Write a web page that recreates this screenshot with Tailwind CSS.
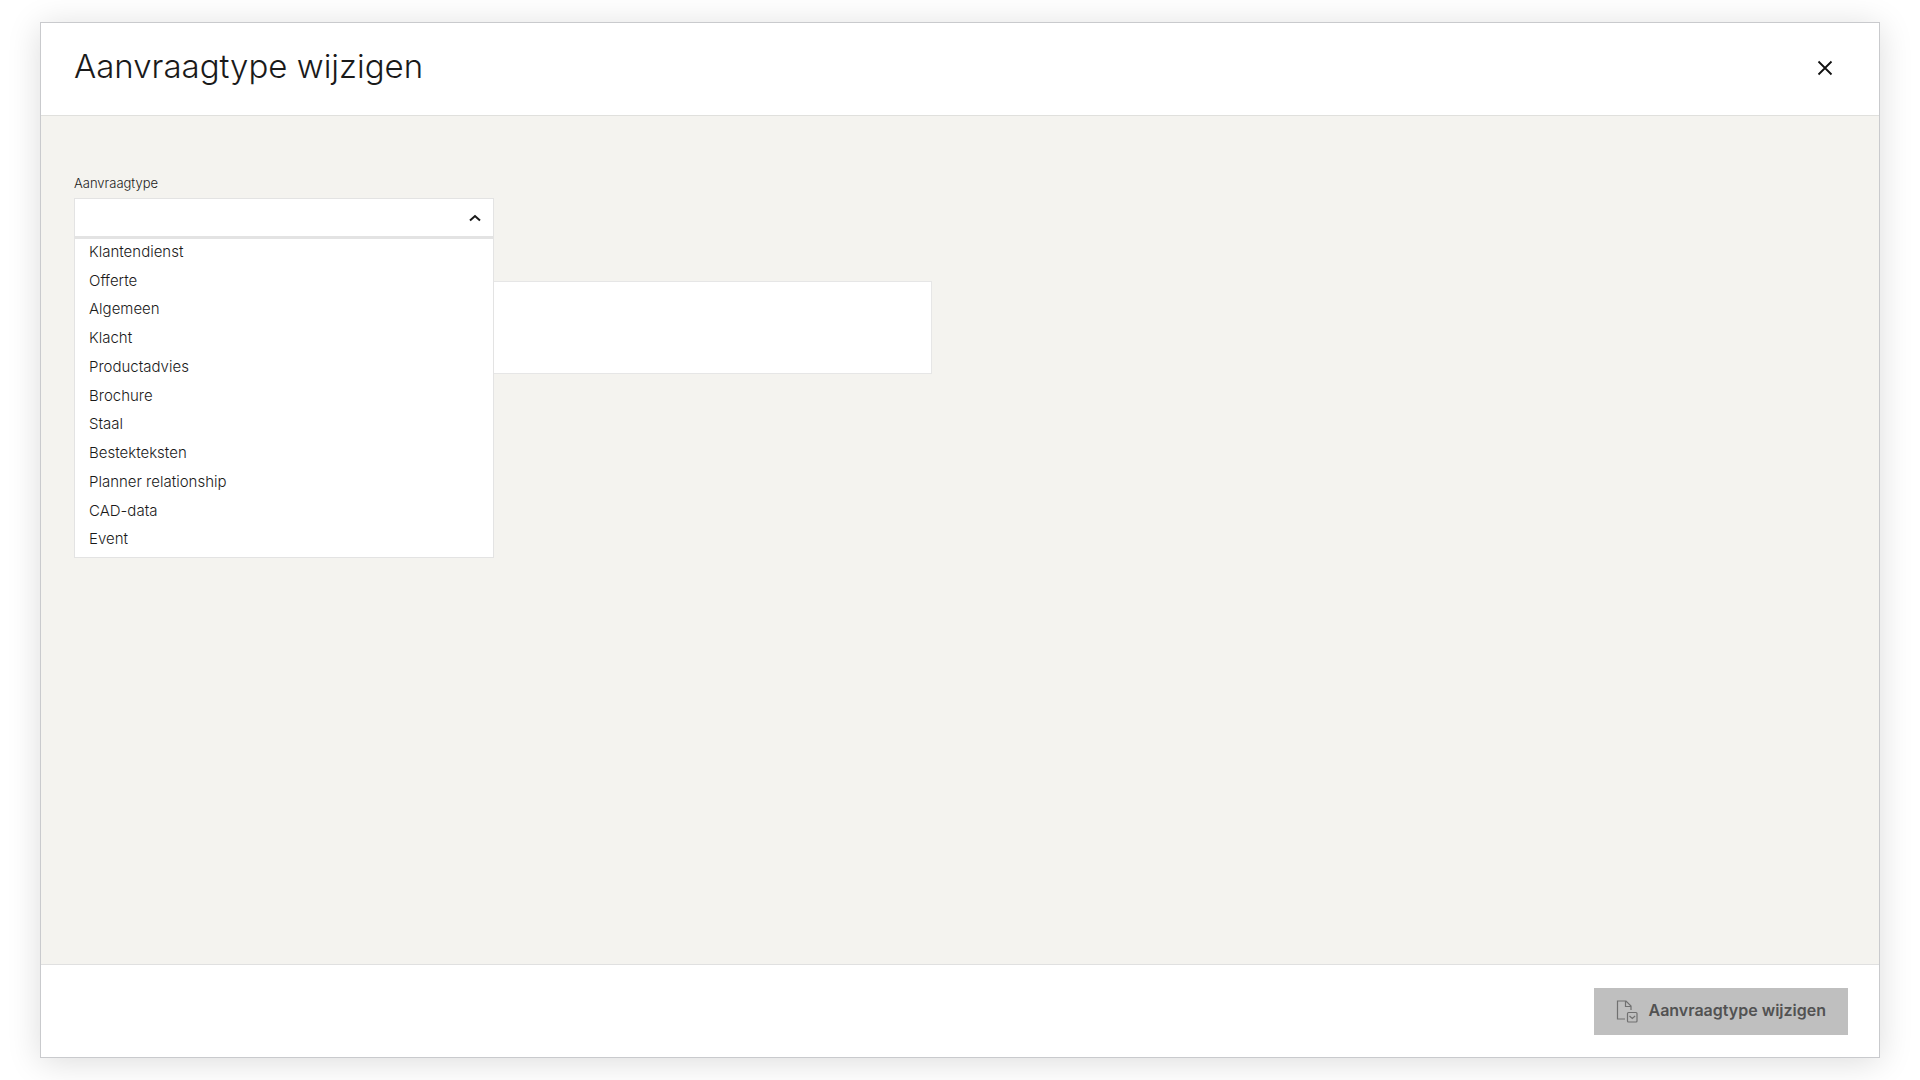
<!DOCTYPE html>
<html lang="nl">
<head>
<meta charset="utf-8">
<meta name="viewport" content="width=device-width, initial-scale=1">
<title>Aanvraagtype wijzigen</title>
<script src="https://cdn.jsdelivr.net/npm/@tailwindcss/browser@4"></script>
</head>
<body class="flex min-h-screen bg-white px-10 py-[22px] font-['Inter','Liberation_Sans',sans-serif] text-[#1a1a1a]">
<section role="dialog" aria-labelledby="dialog-title" class="flex flex-1 flex-col border border-[#c9cacd] bg-white shadow-[0_4px_32px_rgba(0,0,0,0.14)]">
  <header class="flex h-[93px] items-center justify-between border-b border-[#e0e0dd] pr-10 pb-0.5 pl-[33px]">
    <h1 id="dialog-title" class="pb-1 text-[33px] leading-10 font-light">Aanvraagtype wijzigen</h1>
    <button type="button" aria-label="Sluiten" class="flex size-7 items-center justify-center">
      <svg class="size-4" viewBox="0 0 16 16" fill="none" stroke="#111" stroke-width="1.8"><path d="M1.5 1.5l13 13M14.5 1.5l-13 13"/></svg>
    </button>
  </header>

  <main class="flex-1 bg-[#f4f3ef] px-[33px] pt-[58px]">
    <div class="relative w-[420px]">
      <label for="type" class="block pb-1.5 text-[13px] leading-[18px] font-light">Aanvraagtype</label>
      <select id="type" class="block h-[39px] w-full appearance-none border border-[#e3e3e3] bg-white px-3.5"><option value=""></option></select>
      <svg class="pointer-events-none absolute right-[13px] bottom-[11px] h-4 w-3" viewBox="0 0 12 16" fill="none" stroke="#1a1a1a" stroke-width="2"><path d="M1 10.5l5-4.5 5 4.5"/></svg>
      <ul role="listbox" aria-label="Aanvraagtype" class="absolute top-full left-0 z-10 grid h-[321px] w-full auto-rows-fr border border-t-2 border-[#e3e3e3] bg-white pb-0.5 pl-3.5 text-[15px] leading-[26px] font-light">
        <li role="option">Klantendienst</li>
        <li role="option">Offerte</li>
        <li role="option">Algemeen</li>
        <li role="option">Klacht</li>
        <li role="option">Productadvies</li>
        <li role="option">Brochure</li>
        <li role="option">Staal</li>
        <li role="option">Bestekteksten</li>
        <li role="option">Planner relationship</li>
        <li role="option">CAD-data</li>
        <li role="option">Event</li>
      </ul>
    </div>
    <textarea aria-label="Opmerking" class="mt-11 block h-[93px] w-full max-w-[858px] resize-none border border-[#e6e6e6] bg-white p-3.5"></textarea>
  </main>

  <footer class="flex h-[93px] items-center justify-end border-t border-[#e0e0e0] pr-[31px]">
    <button type="button" disabled class="flex h-[47px] items-center gap-2.5 bg-[#bfbfbf] px-[22px] pb-0.5 text-base font-semibold text-[#525252]">
      <svg class="mt-0.5 h-6 w-[22px]" viewBox="0 0 22 24" fill="none" stroke="#707070" stroke-width="1.2"><path d="M9 20H1.5V2H10l5 5v4M9.5 2v5.5H15"/><rect x="11.5" y="13.5" width="9.5" height="9.5" rx="1"/><path d="M13.5 17l2.8 2.5 2.8-2.5"/></svg>
      Aanvraagtype wijzigen
    </button>
  </footer>
</section>
</body>
</html>
